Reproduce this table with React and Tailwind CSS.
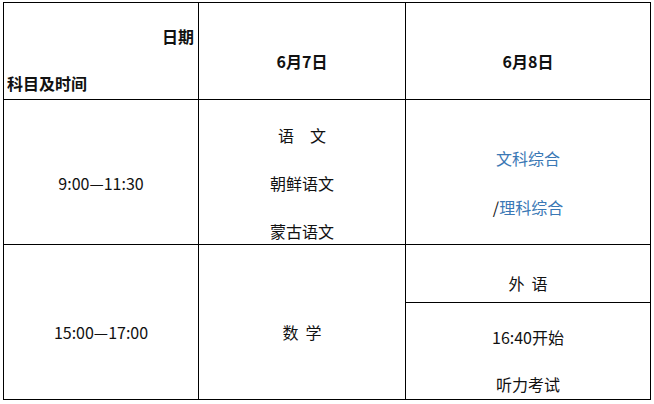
export default function App() {
  const font = { fontFamily: '"Noto Sans CJK SC", "Noto Sans", sans-serif' };
  const cell = 'border-r border-b border-black';

  return (
    <div className="w-[654px] h-[404px] bg-white text-[#111] text-[16px]" style={font}>
      <div className="ml-[3px] pt-[2px]">
        <div className="w-[648px] border-l border-t border-black grid grid-cols-[195px_207px_245px] grid-rows-[97px_145px_155px]">
          {/* header row */}
          <div className={`${cell} font-bold leading-[24px]`}>
            <div className="pt-[21px] pr-[4px] text-right">日期</div>
            <div className="pt-[23px] pl-[3px]">科目及时间</div>
          </div>
          <div className={`${cell} font-bold leading-[24px] pt-[46px] text-center`}>6月7日</div>
          <div className={`${cell} font-bold leading-[24px] pt-[46px] text-center`}>6月8日</div>

          {/* morning */}
          <div className={`${cell} leading-[24px] pt-[71px] text-center`}>9:00—11:30</div>
          <div className={`${cell} leading-[48px] pt-[11px] text-center`}>
            <div>语　文</div>
            <div>朝鲜语文</div>
            <div>蒙古语文</div>
          </div>
          <div className={`${cell} leading-[49px] pt-[34px] text-center text-[#3a78b5]`}>
            <div>文科综合</div>
            <div><span className="text-[#111]">/</span>理科综合</div>
          </div>

          {/* afternoon */}
          <div className={`${cell} leading-[24px] pt-[75px] text-center`}>15:00—17:00</div>
          <div className={`${cell} leading-[24px] pt-[75px] text-center whitespace-pre`}>数  学</div>
          <div className={`${cell} flex flex-col overflow-hidden`}>
            <div className="h-[58px] shrink-0 border-b border-black leading-[24px] pt-[26px] text-center whitespace-pre">外  语</div>
            <div className="flex-1 leading-[47px] pt-[11px] text-center">
              <div>16:40开始</div>
              <div>听力考试</div>
            </div>
          </div>
        </div>
      </div>
    </div>
  );
}
